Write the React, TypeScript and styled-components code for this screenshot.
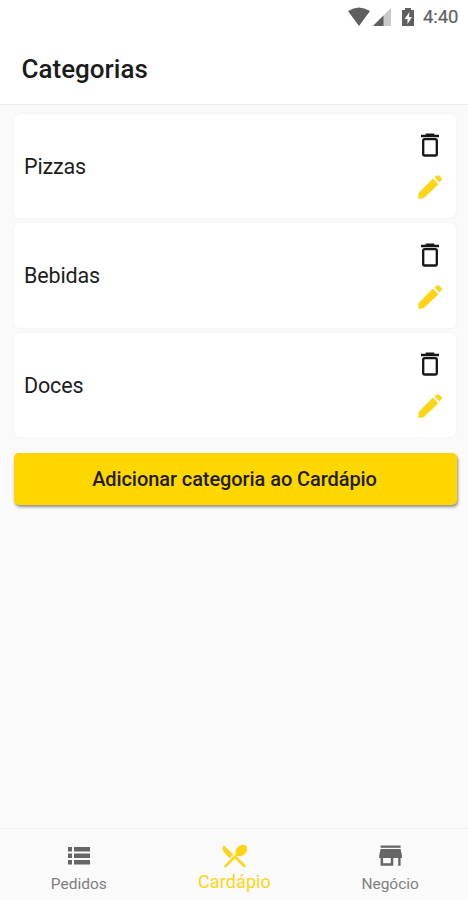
import React from "react";
import styled, { createGlobalStyle } from "styled-components";

const GlobalStyle = createGlobalStyle`
  * { box-sizing: border-box; }
  body { margin: 0; font-family: Roboto, "Liberation Sans", sans-serif; background: #fafafa; }
  button { font: inherit; border: 0; padding: 0; background: none; }
  svg { display: block; }
`;

const Screen = styled.div`
  display: flex;
  flex-direction: column;
  width: 468px;
  height: 900px;
  overflow: hidden;
  background: #fafafa;
`;

const StatusBar = styled.div`
  display: flex;
  flex: none;
  align-items: center;
  justify-content: flex-end;
  height: 34px;
  padding-right: 9px;
  background: #fff;
  color: #5f5f5f;
`;

const Clock = styled.span`
  width: 36px;
  margin-left: 8px;
  font-size: 18.5px;
  line-height: 34px;
  letter-spacing: -0.1px;
  white-space: nowrap;
  -webkit-text-stroke: 0.2px currentColor;
`;

const Header = styled.header`
  flex: none;
  height: 71px;
  padding-left: 21.5px;
  background: #fff;
  border-bottom: 1px solid #ececec;
`;

const Title = styled.h1`
  margin: 0;
  font-size: 26px;
  line-height: 70px;
  font-weight: 500;
  color: #1c1c1c;
`;

const Content = styled.main`
  display: flex;
  flex: 1;
  flex-direction: column;
  padding: 9px 12px 0 14px;
`;

const List = styled.div`
  display: flex;
  flex-direction: column;
  gap: 5.2px;
  margin-right: -1px;
  padding-right: 1px;
`;

const Card = styled.div`
  display: flex;
  align-items: center;
  justify-content: space-between;
  height: 104.3px;
  padding: 0.6px 14px 0 10px;
  border-radius: 6px;
  background: #fff;
  box-shadow: 0 0 2px 1px #f4f4f4;
`;

const Name = styled.span`
  padding-top: 0.8px;
  font-size: 21.5px;
  line-height: 30px;
  letter-spacing: -0.15px;
  color: #1e1e1e;
`;

const Actions = styled.div`
  display: flex;
  flex-direction: column;
  align-items: center;
  gap: 18px;
  width: 24px;
`;

const AddButton = styled.button`
  height: 52px;
  margin-top: 16px;
  margin-right: -1px;
  border-radius: 5px;
  background: #ffd700;
  box-shadow: 1px 2px 3px rgba(60, 50, 40, 0.55);
  color: #211c08;
  && {
    padding-right: 2px;
    font-size: 20px;
    font-weight: 500;
    letter-spacing: -0.08px;
  }
`;

const TabBar = styled.nav`
  display: grid;
  flex: none;
  grid-template-columns: repeat(3, 1fr);
  height: 72px;
  padding-left: 1px;
  border-top: 1.5px solid #f1f1f1;
`;

const Tab = styled.button<{ $active?: boolean }>`
  display: flex;
  flex-direction: column;
  align-items: center;
  padding-top: ${(p) => (p.$active ? "13px" : "14px")};
  color: ${(p) => (p.$active ? "#ffd415" : "#666")};
`;

const TabLabel = styled.span<{ $active?: boolean }>`
  margin-top: ${(p) => (p.$active ? "1px" : "5px")};
  font-size: ${(p) => (p.$active ? "18px" : "15.5px")};
  line-height: 22px;
  letter-spacing: ${(p) => (p.$active ? "0.1px" : "0")};
  color: ${(p) => (p.$active ? "#ffd415" : "#808080")};
`;

const SignalIcons = () => (
  <svg width="67" height="20" viewBox="0 0 67 20">
    <path d="M0 4Q11-3 22 4L11 19Z" fill="currentColor" />
    <path d="M25 19L43 1V19Z" fill="#c9c9c9" />
    <path d="M25 19L35.5 8.5V19Z" fill="currentColor" />
    <path d="M57 1H63V3H66V19H54V3H57Z" fill="currentColor" />
    <path d="M61.5 5L56.5 12H59.5V17L64 10H61Z" fill="#fff" />
  </svg>
);

const TrashIcon = () => (
  <svg width="20" height="24" viewBox="0 0 20 24" fill="#161616">
    <path d="M5.7.5H14.3V1.8H19V4.2H1V1.8H5.7Z" />
    <rect x="3.2" y="6.2" width="13.6" height="16.3" rx="1.5" fill="none" stroke="#161616" strokeWidth="2.3" />
  </svg>
);

const PencilIcon = () => (
  <svg width="24" height="24" viewBox="0 0 24 24" fill="#ffd415">
    <path d="M14.8 3.6L20.4 9.2L6.4 22.6Q5.4 23.4 4.2 23.5L1.2 23.8Q.1 23.8.2 22.7L.4 19.8Q.5 18.2 1.4 17.2Z" />
    <path d="M16.5 2.4L18.4 .8Q19.8-.4 21.2 .8L23.2 2.8Q24.5 4.2 23.2 5.6L21.6 7.5Z" />
  </svg>
);

const OrdersIcon = () => (
  <svg width="24" height="25" viewBox="0 0 24 25" fill="currentColor">
    <path d="M1 4H5V8.5H1ZM7 4H23V8.5H7ZM1 10.5H5V15H1ZM7 10.5H23V15H7ZM1 17H5V21.5H1ZM7 17H23V21.5H7Z" />
  </svg>
);

const MenuIcon = () => (
  <svg width="28" height="28" viewBox="-1 0 28 28" fill="none" stroke="currentColor" strokeWidth="2.6">
    <path d="M3.8 24.8L17.5 11.2M14.2 15L24.2 24.8" />
    <path d="M2.8 3.2L12.3 12.7L8.8 16.2L3.3 10.5Q.2 7 2.8 3.2Z" fill="currentColor" stroke="none" />
    <ellipse cx="20.3" cy="8.5" rx="6.6" ry="4.9" transform="rotate(-45 20.3 8.5)" fill="currentColor" stroke="none" />
  </svg>
);

const StoreIcon = () => (
  <svg width="24" height="25" viewBox="-1 0 24 25" fill="currentColor">
    <path d="M1.6 2.5H21.6V4.8H1.6Z" />
    <path fillRule="evenodd" d="M1.6 6H21.6L22.9 12.5V15H21.6V22.8H19.2V15H14.3V22.8H1.6V15H.2V12.5ZM4.1 15V20.3H11.8V15Z" />
  </svg>
);

const categories = ["Pizzas", "Bebidas", "Doces"];

export default function App() {
  return (
    <>
      <GlobalStyle />
      <Screen>
        <StatusBar>
          <SignalIcons />
          <Clock>4:40</Clock>
        </StatusBar>
        <Header>
          <Title>Categorias</Title>
        </Header>
        <Content>
          <List>
            {categories.map((name) => (
              <Card key={name}>
                <Name>{name}</Name>
                <Actions>
                  <TrashIcon />
                  <PencilIcon />
                </Actions>
              </Card>
            ))}
          </List>
          <AddButton>Adicionar categoria ao Cardápio</AddButton>
        </Content>
        <TabBar>
          <Tab>
            <OrdersIcon />
            <TabLabel>Pedidos</TabLabel>
          </Tab>
          <Tab $active>
            <MenuIcon />
            <TabLabel $active>Cardápio</TabLabel>
          </Tab>
          <Tab>
            <StoreIcon />
            <TabLabel>Negócio</TabLabel>
          </Tab>
        </TabBar>
      </Screen>
    </>
  );
}
